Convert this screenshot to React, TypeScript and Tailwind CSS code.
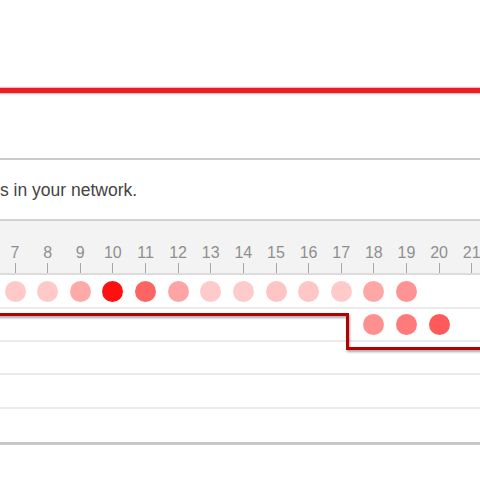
import React from "react";

const cols = [7, 8, 9, 10, 11, 12, 13, 14, 15, 16, 17, 18, 19, 20, 21];

const row1: Record<number, string> = {
  7: "#ffc9c9",
  8: "#ffc9c9",
  9: "#ffa9a9",
  10: "#ff1010",
  11: "#ff6464",
  12: "#ffa4a4",
  13: "#ffcaca",
  14: "#ffcaca",
  15: "#ffc4c4",
  16: "#ffc6c6",
  17: "#ffcaca",
  18: "#ffa6a6",
  19: "#ff9292",
};
const row2: Record<number, string> = {
  18: "#ff9090",
  19: "#ff7a7a",
  20: "#ff5a5a",
};

const font = { fontFamily: '"Liberation Sans", Arial, sans-serif' };

function DotRow({ data, h }: { data: Record<number, string>; h: string }) {
  return (
    <div className={`flex ${h} border-b-2 border-[#ebebeb] bg-white`}>
      <div className="flex ml-[-1.32px]">
        {cols.map((c) => (
          <div key={c} className="w-[32.64px] shrink-0 flex items-center justify-center">
            {data[c] ? (
              <div className="w-[21px] h-[21px] rounded-full" style={{ backgroundColor: data[c] }} />
            ) : null}
          </div>
        ))}
      </div>
    </div>
  );
}

export default function App() {
  return (
    <div className="relative w-[480px] h-[480px] overflow-hidden bg-white" style={font}>
      <div className="h-[88px]" />
      <div className="h-[5px] bg-[#ec1c24] shadow-[0_0_1px_1px_rgba(236,28,36,0.3)]" />
      <div className="h-[65px]" />
      <div className="h-[2px] bg-[#cacaca]" />
      <div className="h-[59px] flex items-center">
        <span className="text-[17.5px] text-[#444] leading-none pt-[2px]">s in your network.</span>
      </div>
      <div className="h-[2px] bg-[#d2d2d2]" />
      <div className="h-[54px] bg-[#f3f3f3] border-b-2 border-[#dcdcdc] flex">
        <div className="flex ml-[-1.32px]">
          {cols.map((c) => (
            <div key={c} className="w-[32.64px] shrink-0 flex flex-col items-center">
              <div className="h-[42px] flex items-end justify-center text-[16px] leading-none text-[#8f8f8f] pb-[2px]">
                {c}
              </div>
              <div className="w-px h-[10px] bg-[#a8a8a8]" />
            </div>
          ))}
        </div>
      </div>
      <DotRow data={row1} h="h-[34px]" />
      <DotRow data={row2} h="h-[33px]" />
      <DotRow data={{}} h="h-[33px]" />
      <DotRow data={{}} h="h-[34px]" />
      <div className="h-[33px] bg-white" />
      <div className="h-[3px] bg-[#c8c8c8]" />

      <svg className="absolute top-0 left-0 pointer-events-none" width="480" height="480">
        <defs>
          <filter id="sh" x="-10%" y="-10%" width="120%" height="140%">
            <feDropShadow dx="1" dy="2" stdDeviation="1" floodColor="#000" floodOpacity="0.35" />
          </filter>
        </defs>
        <polyline
          points="-5,314.5 347.5,314.5 347.5,348.5 490,348.5"
          fill="none"
          stroke="#b40000"
          strokeWidth="3"
          strokeLinejoin="miter"
          filter="url(#sh)"
        />
      </svg>
    </div>
  );
}
